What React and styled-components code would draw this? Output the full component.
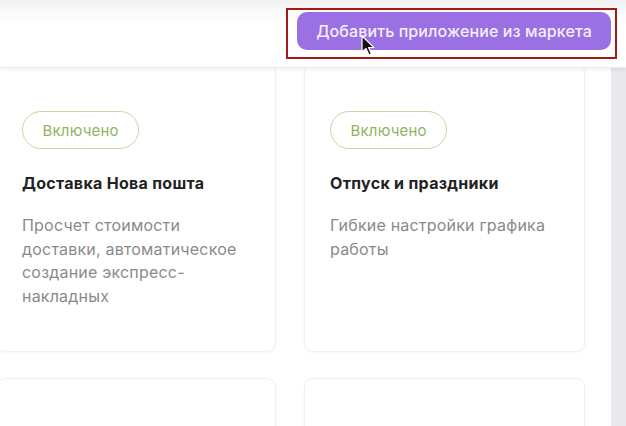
import styled, { createGlobalStyle } from "styled-components";

const Global = createGlobalStyle`
  html, body {
    margin: 0;
    padding: 0;
    background: #ffffff;
    font-family: Inter, "Noto Sans", "Liberation Sans", sans-serif;
    overflow: hidden;
  }
`;

const Page = styled.div`
  width: 626px;
  height: 426px;
  display: flex;
  flex-direction: column;
  overflow: hidden;
`;

const Header = styled.header`
  position: relative;
  z-index: 2;
  height: 68px;
  flex: 0 0 68px;
  display: flex;
  align-items: flex-start;
  justify-content: flex-end;
  padding: 8px 9px 0 0;
  box-sizing: border-box;
  background: linear-gradient(#f1f1f1 0px, #fbfbfb 14px, #ffffff 28px);
  box-shadow: 0 2px 4px rgba(0, 0, 0, 0.06);
  border-bottom: 1px solid #ececec;
`;

const Highlight = styled.div`
  position: relative;
  border: 2px solid #a31818;
  padding: 2px 4px 7px 9px;
`;

const AddButton = styled.button`
  height: 38px;
  width: 314px;
  border: 0;
  border-radius: 10px;
  background: #9a70e2;
  color: #f4eeff;
  font-family: inherit;
  font-size: 16px;
  font-weight: 500;
  letter-spacing: 0.1px;
  cursor: pointer;
`;

const Cursor = styled.svg`
  position: absolute;
  left: 73px;
  top: 25px;
  width: 16px;
  height: 22px;
`;

const Body = styled.div`
  flex: 1;
  display: flex;
  margin-top: -4px;
`;

const Content = styled.main`
  flex: 1;
  overflow: hidden;
`;

const Grid = styled.div`
  margin-left: -4px;
  display: grid;
  grid-template-columns: 280px 281px;
  column-gap: 28px;
  row-gap: 26px;
`;

const Card = styled.div`
  box-sizing: border-box;
  min-height: 288px;
  padding: 46px 22px 24px 25px;
  background: #fff;
  border: 1px solid #efefef;
  border-radius: 9px;
  box-shadow: 0 1px 3px rgba(0, 0, 0, 0.04);
`;

const Badge = styled.span`
  display: inline-flex;
  align-items: center;
  height: 38px;
  box-sizing: border-box;
  padding: 0 19.5px;
  border: 1px solid #cbd5a6;
  border-radius: 19px;
  color: #93b25f;
  font-size: 15px;
  letter-spacing: 0.2px;
`;

const Title = styled.h3`
  margin: 24px 0 0;
  font-size: 16px;
  font-weight: 700;
  letter-spacing: 0.3px;
  color: #222;
`;

const Text = styled.p`
  margin: 21px 0 0;
  font-size: 16px;
  line-height: 23.5px;
  letter-spacing: 0.2px;
  color: #8a8a8a;
`;

const Scrollbar = styled.div`
  flex: 0 0 15px;
  background: #e9e9ed;
`;

const apps = [
  {
    title: "Доставка Нова пошта",
    text: "Просчет стоимости доставки, автоматическое создание экспресс-накладных",
    on: true,
  },
  {
    title: "Отпуск и праздники",
    text: "Гибкие настройки графика работы",
    on: true,
  },
  { title: "", text: "", on: false },
  { title: "", text: "", on: false },
];

export default function App() {
  return (
    <Page>
      <Global />
      <Header>
        <Highlight>
          <AddButton>Добавить приложение из маркета</AddButton>
          <Cursor viewBox="0 0 16 22">
            <path
              d="M1 1 L1 17 L5 13.5 L8 20 L10.5 19 L7.6 12.6 L12.8 12.4 Z"
              fill="#111"
              stroke="#fff"
              strokeWidth="1.2"
              strokeLinejoin="round"
            />
          </Cursor>
        </Highlight>
      </Header>
      <Body>
        <Content>
          <Grid>
            {apps.map((app, i) => (
              <Card key={i}>
                {app.on && <Badge>Включено</Badge>}
                {app.title && <Title>{app.title}</Title>}
                {app.text && <Text>{app.text}</Text>}
              </Card>
            ))}
          </Grid>
        </Content>
        <Scrollbar />
      </Body>
    </Page>
  );
}
